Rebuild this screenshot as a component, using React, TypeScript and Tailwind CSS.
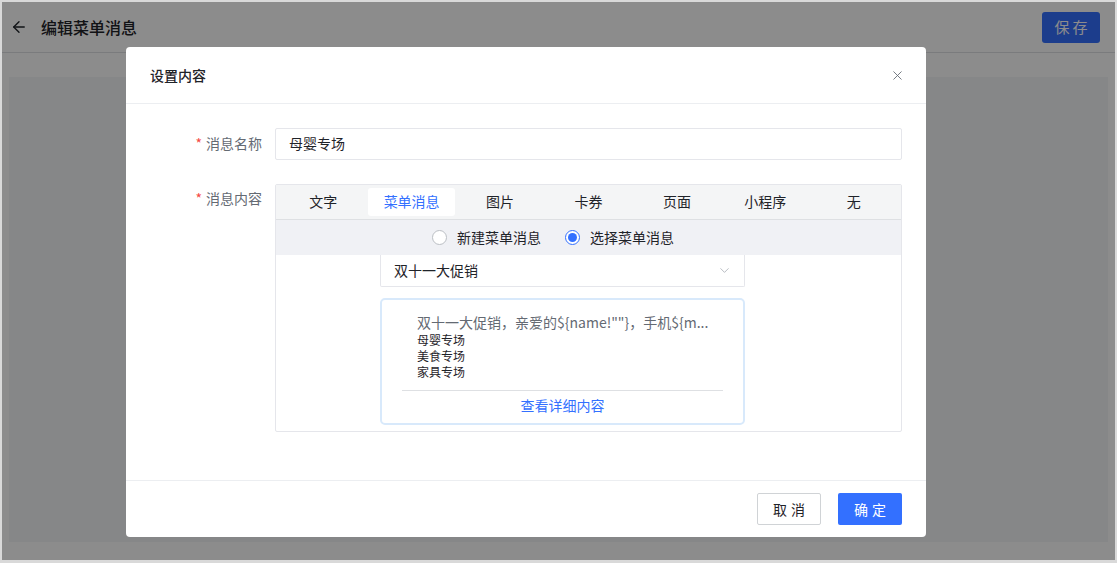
import { ArrowLeft, X, ChevronDown } from 'lucide-react';

const font = { fontFamily: '"Noto Sans CJK SC", "Noto Sans", sans-serif' };
const tabs = ['文字', '菜单消息', '图片', '卡券', '页面', '小程序', '无'];

export default function App() {
  return (
    <div className="w-[1117px] h-[563px] border-2 border-b-[3px] border-[#d9d9d9] relative overflow-hidden bg-white text-[#1f2329]" style={font}>
      {/* page beneath the dialog */}
      <div className="h-[51px] flex items-center justify-between px-2 border-b border-[#dee0e3]">
        <div className="flex items-center">
          <ArrowLeft size={18} strokeWidth={1.8} className="text-[#1f2329]" />
          <span className="ml-[13px] text-[16px] font-medium">编辑菜单消息</span>
        </div>
        <button className="w-[58px] h-[31px] rounded-[3px] bg-[#3370ff] text-white text-[15px] tracking-[3px] pl-[3px] mr-[7px] mt-[1px]">保存</button>
      </div>
      <div className="mx-[7px] mt-6 h-[465px] bg-[#f5f6f7]" />

      {/* mask */}
      <div className="absolute inset-0 bg-black/[0.45]" />

      {/* dialog */}
      <div className="absolute left-[124px] top-[45px] w-[800px] h-[490px] bg-white rounded-[4px] flex flex-col">
        <div className="h-[57px] flex items-center justify-between pl-6 pr-[21px] border-b border-[#eceef1]">
          <span className="text-[14px] font-medium text-[#1f2329]">设置内容</span>
          <X size={15} strokeWidth={1.4} className="text-[#646a73]" />
        </div>

        <div className="flex-1 pt-6 pr-6">
          <div className="flex items-center">
            <div className="w-[149px] pr-[13px] text-right text-[14px] text-[#646a73] -mt-[2px]"><span className="text-[#f54a45] mr-1">*</span>消息名称</div>
            <div className="flex-1 h-[32px] border border-[#e5e6eb] rounded-[2px] flex items-center px-[13px] pb-[2px] text-[14px] text-[#1f2329]">母婴专场</div>
          </div>

          <div className="flex mt-[24px]">
            <div className="w-[149px] pr-[13px] text-right text-[14px] text-[#646a73] pt-[4px]"><span className="text-[#f54a45] mr-1">*</span>消息内容</div>
            <div className="flex-1 h-[248px] border border-[#e5e6eb] rounded-[2px] flex flex-col">
              <div className="h-[35px] bg-[#f4f5f6] border-b border-[#dee0e3] grid grid-cols-7 px-[3px] pt-[3px] pb-[3px]">
                {tabs.map((t) => (
                  <div key={t} className={`flex items-center justify-center pb-[1px] text-[14px] rounded-[3px] ${t === '菜单消息' ? 'bg-white text-[#3370ff] mx-[1px]' : 'text-[#1f2329]'}`}>{t}</div>
                ))}
              </div>
              <div className="h-[35px] bg-[#f0f1f5] flex items-center pl-[156px] pb-[1px] text-[14px] text-[#1f2329]">
                <span className="w-[15px] h-[15px] rounded-full border border-[#bbbfc4] bg-white" />
                <span className="ml-[10px]">新建菜单消息</span>
                <span className="ml-[24px] w-[15px] h-[15px] rounded-full border border-[#3370ff] bg-white flex items-center justify-center">
                  <span className="w-[9px] h-[9px] rounded-full bg-[#3370ff]" />
                </span>
                <span className="ml-[10px]">选择菜单消息</span>
              </div>
              <div className="pl-[104px]">
                <div className="w-[365px] h-[32px] border border-[#e5e6eb] border-t-0 rounded-b-[2px] flex items-center justify-between pl-[13px] pr-[12px] pb-[1px] text-[14px]">
                  <span>双十一大促销</span>
                  <ChevronDown size={15} strokeWidth={1} className="text-[#8f959e]" />
                </div>
                <div className="mt-[11px] w-[365px] h-[127px] border-2 border-[#d8e9fb] rounded-[5px] px-[20px] pt-[12px]">
                  <div className="pl-[15px] text-[14px] text-[#646a73] whitespace-nowrap overflow-hidden leading-[20px]">双十一大促销，亲爱的{'${name!""}'}，手机{'${m'}...</div>
                  <div className="pl-[15px] text-[12px] leading-[16px] text-[#1f2329]">
                    <div>母婴专场</div>
                    <div>美食专场</div>
                    <div>家具专场</div>
                  </div>
                  <div className="mt-[10px] border-t border-[#dee0e3] pt-[4px] text-center text-[14px] text-[#3370ff] leading-[20px]">查看详细内容</div>
                </div>
              </div>
            </div>
          </div>
        </div>

        <div className="h-[57px] border-t border-[#eceef1] flex items-center justify-end gap-[17px] pr-6">
          <button className="w-[64px] h-[32px] border border-[#d0d3d6] rounded-[2px] text-[14px] text-[#1f2329] tracking-[4px] pl-[4px]">取消</button>
          <button className="w-[64px] h-[32px] rounded-[2px] bg-[#3370ff] text-white text-[14px] tracking-[4px] pl-[4px]">确定</button>
        </div>
      </div>
    </div>
  );
}
